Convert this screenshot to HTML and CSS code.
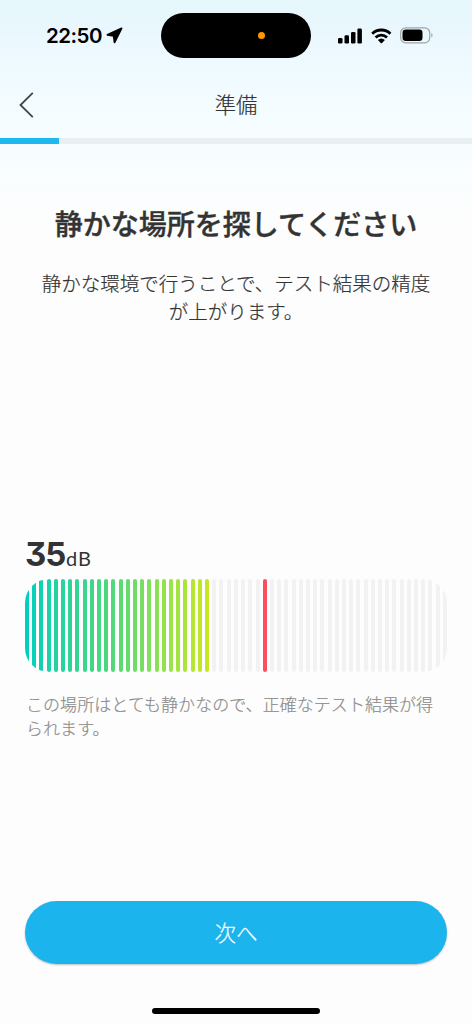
FILE: index.html
```html
<!DOCTYPE html>
<html lang="ja">
<head>
<meta charset="utf-8">
<title>準備</title>
<link rel="stylesheet" href="styles.css">
</head>
<body>
<div class="screen">
  <div class="status">
    <div class="status-left">
      <span class="time">22:50</span>
      <svg class="location" width="17" height="17" viewBox="0 0 17 17"><path d="M15.600 1.300 1.400 7.800l6.200 1.200.900 6.500Z" stroke="#000" stroke-width="1.700" stroke-linejoin="round"/></svg>
    </div>
    <div class="island"><span class="mic-dot"></span></div>
    <div class="status-right">
      <svg width="25" height="16" viewBox="0 0 25 16"><rect x="0" y="10" width="4.500" height="5.500" rx="1.300"/><rect x="6.500" y="7.200" width="4.500" height="8.300" rx="1.300"/><rect x="13" y="4" width="4.500" height="11.500" rx="1.300"/><rect x="19.400" y=".5" width="4.500" height="15" rx="1.300"/></svg>
      <svg class="wifi" width="21" height="16" viewBox="0 0 21 16"><path d="M1.200 5.700a13 13 0 0 1 18.200 0M4.600 9.500a8.200 8.200 0 0 1 11.400 0" fill="none" stroke="#000" stroke-width="2.800"/><path d="M6.900 12a5.200 5.200 0 0 1 7 0l-2.800 2.900q-.7.7-1.400 0Z"/></svg>
      <svg class="battery" width="34" height="17" viewBox="0 0 34 17"><rect x=".7" y=".8" width="29" height="15" rx="5" fill="none" stroke="#9da5a8" stroke-width="1.200"/><rect x="2.500" y="2.600" width="20" height="11.400" rx="3.300"/><path d="M31.300 6v4.600c1.700-.8 1.700-3.800 0-4.600Z" fill="#9da5a8"/></svg>
    </div>
  </div>
  <header class="nav">
    <svg class="back" width="17" height="28" viewBox="0 0 17 28"><path d="M14.800 1.800 2.500 14 14.800 26.200" fill="none" stroke="#444" stroke-width="1.800"/></svg>
    <h1 class="nav-title">準備</h1>
  </header>
  <div class="progress"><div class="progress-fill"></div></div>
  <main class="content">
    <h2 class="heading">静かな場所を探してください</h2>
    <p class="lead">静かな環境で行うことで、テスト結果の精度<br>が上がります。</p>
    <section class="meter">
      <div class="reading"><span class="value">35</span><span class="unit">dB</span></div>
      <div class="bars" id="bars"></div>
      <p class="note">この場所はとても静かなので、正確なテスト結果が得<br>られます。</p>
    </section>
    <button class="next">次へ</button>
  </main>
  <div class="home-bar"></div>
</div>
<script src="meter.js"></script>
</body>
</html>
```
FILE: styles.css
```css
* { box-sizing: border-box; }
body {
  margin: 0;
  font-family: "Noto Sans CJK JP", sans-serif;
  color: #333;
}
.screen {
  display: flex;
  flex-direction: column;
  width: 472px;
  height: 1024px;
  overflow: hidden;
  background: linear-gradient(#e6f7fc 0, #e8f7fd 22px, #effaff 65px, #f4fcff 110px, #f9feff 170px, #fdfdfd 222px);
}
.status {
  display: grid;
  grid-template-columns: 161px 150px 161px;
  align-items: center;
  height: 71px;
}
.status-left, .status-right { display: flex; align-items: center; }
.status-left { padding-left: 46px; }
.time {
  font: 600 20.500px/24px Inter, sans-serif;
  letter-spacing: -0.5px;
  color: #000;
}
.location { margin-left: 4px; }
.island {
  display: flex;
  align-items: center;
  justify-content: flex-end;
  height: 45px;
  padding-right: 46px;
  border-radius: 23px;
  background: #000;
}
.mic-dot { width: 7px; height: 7px; border-radius: 50%; background: #ff9500; }
.status-right { padding-left: 27px; }
.wifi { margin-left: 8px; }
.battery { margin-left: 8px; }
.nav {
  display: grid;
  grid-template-columns: 60px 1fr 60px;
  align-items: center;
  height: 67px;
}
.back { margin-left: 18px; }
.nav-title {
  margin: 0 0 2px;
  font-size: 21.300px;
  font-weight: 300;
  line-height: 30px;
  text-align: center;
  -webkit-text-stroke: 0.2px;
}
.progress { height: 6px; background: #e9eef2; }
.progress-fill { width: 59px; height: 6px; background: #1cb8ee; }
.content {
  display: flex;
  flex-direction: column;
  flex: 1;
  padding: 59px 25px 0;
}
.heading {
  margin: 0;
  font-size: 28px;
  font-weight: 500;
  line-height: 40px;
  text-align: center;
  white-space: nowrap;
  -webkit-text-stroke: 0.4px;
}
.lead {
  margin: 26px 0 0;
  font-size: 19.500px;
  font-weight: 300;
  line-height: 28px;
  text-align: center;
  white-space: nowrap;
  -webkit-text-stroke: 0.2px;
}
.meter { margin-top: 208px; }
.reading {
  display: flex;
  align-items: baseline;
  height: 46px;
  line-height: 42px;
  font-family: Inter, sans-serif;
}
.value {
  font-size: 33px;
  font-weight: 700;
  letter-spacing: -1.2px;
  font-feature-settings: "cv09";
}
.unit {
  margin-left: 1px;
  font-family: Lato, sans-serif;
  font-size: 20px;
  letter-spacing: 0.8px;
}
.bars {
  display: flex;
  justify-content: space-between;
  height: 93px;
  border-radius: 24px;
  overflow: hidden;
}
.bar { width: 4px; border-radius: 2px; background: #f2f2f2; }
.bar.limit { background: #ff4d60; }
.note {
  margin: 20px 0 0 1px;
  font-size: 17px;
  font-weight: 300;
  line-height: 24px;
  letter-spacing: 0.05px;
  color: #8c8c8c;
  white-space: nowrap;
  -webkit-text-stroke: 0.2px;
}
.next {
  height: 63px;
  margin-top: 161px;
  padding: 0 0 2px;
  border: 0;
  border-radius: 32px;
  background: #1cb4ed;
  box-shadow: 0 1px 2px rgba(0, 0, 0, 0.25);
  color: #fff;
  font: 300 21.500px/30px "Noto Sans CJK JP", sans-serif;
  -webkit-text-stroke: 0.2px;
}
.home-bar {
  width: 168px;
  height: 6px;
  margin: 0 auto 10px;
  border-radius: 3px;
  background: #000;
}
```
FILE: meter.js
```js
const TOTAL = 59, LIT = 26, LIMIT = 33;
const stops = [[0, [0, 207, 190]], [4, [34, 211, 160]], [12, [82, 216, 122]], [18, [138, 225, 84]], [25, [197, 232, 36]]];

function colorAt(i) {
  let k = 1;
  while (stops[k][0] < i) k++;
  const [a, from] = stops[k - 1], [b, to] = stops[k];
  const t = (i - a) / (b - a);
  return `rgb(${from.map((v, n) => Math.round(v + (to[n] - v) * t)).join(",")})`;
}

const bars = document.getElementById("bars");
for (let i = 0; i < TOTAL; i++) {
  const bar = document.createElement("div");
  bar.className = i === LIMIT ? "bar limit" : "bar";
  if (i < LIT) bar.style.background = colorAt(i);
  bars.appendChild(bar);
}
```
